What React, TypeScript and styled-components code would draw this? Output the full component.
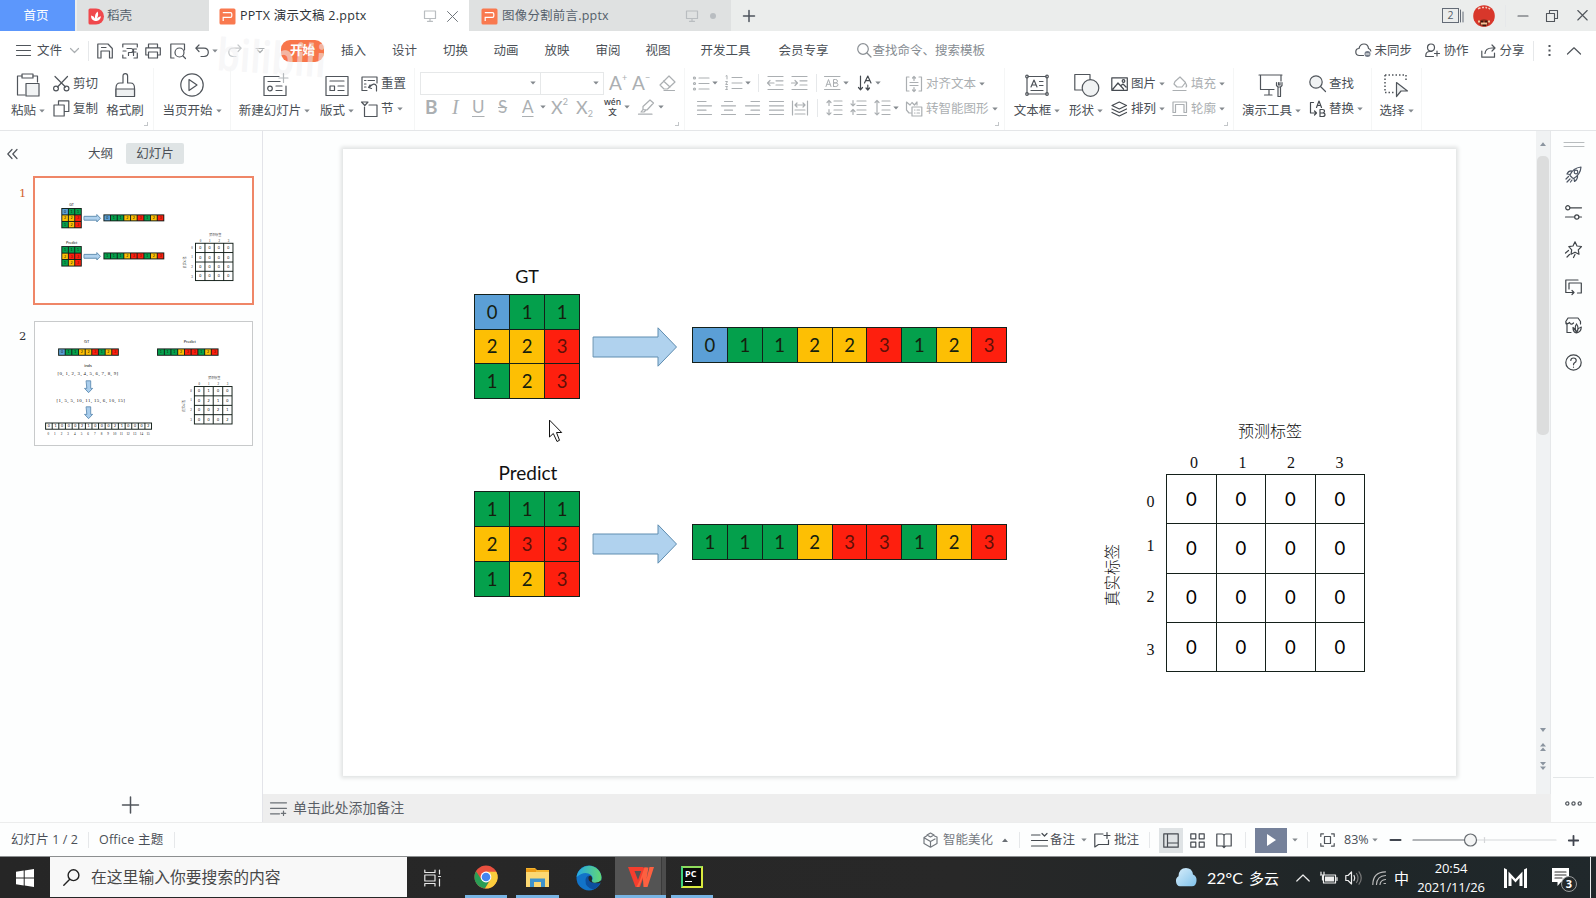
import React from "react";
import styled, { createGlobalStyle } from "styled-components";

const GlobalStyle = createGlobalStyle`
  * { box-sizing: border-box; }
  html, body { margin: 0; padding: 0; overflow: hidden; }
  body {
    width: 1596px;
    height: 898px;
    font-family: "Noto Sans", "Noto Sans CJK SC", sans-serif;
    font-size: 12.5px;
    color: #4a4f56;
    background: #fff;
  }
  svg { display: block; flex: none; overflow: visible; }
`;

const INK = "#50555b";
const DIM = "#abafb2";

/* ---------- shared pieces ---------- */

const Window = styled.div`
  display: flex;
  flex-direction: column;
  width: 1596px;
  height: 898px;
  line-height: 18px;
  white-space: nowrap;
  position: relative;
`;

const Slot = styled.div<{ $w: number; $center?: boolean; $dim?: boolean }>`
  flex: none;
  display: flex;
  align-items: center;
  justify-content: ${(p) => (p.$center ? "center" : "flex-start")};
  width: ${(p) => p.$w}px;
  height: 100%;
  color: ${(p) => (p.$dim ? DIM : "inherit")};
`;

const VRule = styled.div<{ $h: number }>`
  width: 1px;
  height: ${(p) => p.$h}px;
  background: #e6e8ea;
`;

type IconProps = {
  w: number;
  h: number;
  d?: string;
  c?: string;
  sw?: number;
  children?: React.ReactNode;
};

const Icon = ({ w, h, d, c = INK, sw = 1.2, children }: IconProps) => (
  <svg
    width={w}
    height={h}
    viewBox={`0 0 ${w} ${h}`}
    fill="none"
    stroke={c}
    strokeWidth={sw}
    strokeLinecap="round"
    strokeLinejoin="round"
  >
    {d && <path d={d} />}
    {children}
  </svg>
);

const CaretBox = styled.span`
  display: inline-flex;
  margin-left: 3px;
`;

const Caret = ({ c = "#84898e", up = false }: { c?: string; up?: boolean }) => (
  <CaretBox>
    <svg width="6" height="4" viewBox="0 0 6 4">
      <path d={up ? "M0 4L3 0.5L6 4Z" : "M0.3 0.5H5.7L3 3.6Z"} fill={c} />
    </svg>
  </CaretBox>
);

/* ---------- document tabs ---------- */

const TabBar = styled.div`
  display: flex;
  height: 31px;
  background: #ebedec;
`;

const HomeTab = styled.div`
  width: 75px;
  margin-right: 2px;
  display: flex;
  align-items: center;
  justify-content: center;
  padding: 1px 3px 0 0;
  color: #fff;
  background: #5c97fc;
`;

const DocTab = styled.div<{ $w: number; $active?: boolean; $pad: number }>`
  width: ${(p) => p.$w}px;
  display: flex;
  align-items: center;
  padding: 1px 0 0 ${(p) => p.$pad}px;
  color: ${(p) => (p.$active ? "#2e3338" : "#555f6b")};
  background: ${(p) => (p.$active ? "#fff" : "#dfe1e1")};
`;

const TabName = styled.span<{ $track?: number }>`
  font-family: "Open Sans", "Noto Sans CJK SC", sans-serif;
  letter-spacing: ${(p) => p.$track ?? 0}px;
`;

const PptIcon = () => (
  <svg width="17" height="17" viewBox="0 0 17 17">
    <rect x="0.5" y="0.5" width="16" height="16" rx="1.500" fill="#f9794f" />
    <path d="M4.200 13V9.400H11.500Q12.800 9.400 12.800 8.100V5.900Q12.800 4.600 11.500 4.600H3.800" fill="none" stroke="#fff" strokeWidth="1.200" />
  </svg>
);

const DocerIcon = () => (
  <svg width="16" height="17" viewBox="0 0 16 17">
    <path d="M2 .5H8A8 8 0 0 1 8 16.5H2Q.5 16.5 .5 15V2Q.5.5 2 .5Z" fill="#f0484c" />
    <path d="M7 13Q3 12 3 7.500Q6 8 7 10.500Q6.500 6 9.500 3.500Q11 6.500 9 10.500Q10.500 8.500 13 8.300Q12.500 12.500 8.500 13Z" fill="#fff" />
  </svg>
);

const Monitor = () => <Icon w={12} h={12} c="#b9bdc0" d="M.5 1H11.500V8.500H.5ZM6 8.500V11M3.500 11.300H8.500" />;

const TabEnd = styled.div`
  width: 711px;
  padding-left: 12px;
  display: flex;
  align-items: center;
`;

const Avatar = () => (
  <svg width="22" height="22" viewBox="0 0 22 22">
    <circle cx="11" cy="11" r="10.800" fill="#d8372b" />
    <path d="M5 3.800L7.500 2.800M9 2.500H11M12.500 2.300L14 3M15.500 3L17 4.200" stroke="#f3c9bd" strokeWidth="1.500" fill="none" />
    <path d="M6 16Q11 12.500 16 16L15 20.500H7Z" fill="#8b2d1c" />
    <path d="M5 15.500H7V17.500H5ZM15 15.500H17V17.500H15ZM8 17.500H14V19.500H8Z" fill="#f0c79b" />
    <path d="M8 16.500H10M12 16.500H14M9.500 20.500H13" stroke="#3a1c10" strokeWidth="1.500" />
  </svg>
);

/* ---------- menu ---------- */

const MenuBar = styled.div`
  position: relative;
  display: flex;
  align-items: center;
  height: 37px;
  padding: 2px 0 0 16px;
  background: #fff;
`;

const Pill = styled.div`
  width: 43px;
  height: 22px;
  border-radius: 9px;
  display: flex;
  align-items: center;
  justify-content: center;
  background: #f8764b;
  color: #fff;
  font-weight: 700;
`;

const Watermark = styled.div`
  position: absolute;
  left: 217px;
  top: 3px;
  transform: rotate(4deg) scaleY(1.2);
  font: 600 37px/46px "Noto Sans", sans-serif;
  color: rgba(240, 240, 242, 0.55);
  pointer-events: none;
`;

const SearchHint = styled.span`
  color: #858b91;
`;

const MENU: [string, number][] = [
  ["插入", 51], ["设计", 51], ["切换", 50.5], ["动画", 51], ["放映", 51],
  ["审阅", 50], ["视图", 55], ["开发工具", 78], ["会员专享", 78],
];

/* ---------- ribbon ---------- */

const Ribbon = styled.div`
  display: flex;
  height: 63px;
  background: #fff;
  border-bottom: 1px solid #e4e6e8;
`;

const Group = styled.div<{ $w: number; $pad?: number }>`
  position: relative;
  flex: none;
  display: flex;
  width: ${(p) => p.$w}px;
  padding: 3px 0 2px ${(p) => p.$pad ?? 0}px;
  border-right: 1px solid #f5f6f6;
`;

const Corner = styled.div`
  position: absolute;
  right: 5px;
  bottom: 4px;
  width: 4px;
  height: 4px;
  border: solid #c3c6c9;
  border-width: 0 1px 1px 0;
`;

const BigBox = styled.div<{ $w: number }>`
  flex: none;
  width: ${(p) => p.$w}px;
  padding-top: 2px;
  display: flex;
  flex-direction: column;
  align-items: center;
  gap: 5px;
`;

const IconWell = styled.div`
  height: 24px;
  display: flex;
  align-items: center;
`;

const LabelLine = styled.div`
  height: 18px;
  display: flex;
  align-items: center;
`;

const Big = ({ w, label, caret, children }: { w: number; label: string; caret?: boolean; children: React.ReactNode }) => (
  <BigBox $w={w}>
    <IconWell>{children}</IconWell>
    <LabelLine>
      {label}
      {caret && <Caret />}
    </LabelLine>
  </BigBox>
);

const Stack = styled.div<{ $w: number; $pad?: number }>`
  flex: none;
  width: ${(p) => p.$w}px;
  padding-left: ${(p) => p.$pad ?? 0}px;
  display: flex;
  flex-direction: column;
`;

const Line = styled.div<{ $pad?: number; $h?: number }>`
  height: ${(p) => p.$h ?? 25}px;
  display: flex;
  align-items: center;
  padding-left: ${(p) => p.$pad ?? 0}px;
`;

const FontBox = styled.div<{ $w: number }>`
  width: ${(p) => p.$w}px;
  height: 23px;
  border: 1px solid #e6e8e9;
  margin-right: -1px;
  display: flex;
  align-items: center;
  justify-content: flex-end;
  padding-right: 4px;
`;

const Glyph = styled.span<{ $size: number; $bold?: boolean; $italic?: boolean; $serif?: boolean; $line?: string }>`
  font: ${(p) => (p.$italic ? "italic " : "")}${(p) => (p.$bold ? 700 : 400)} ${(p) => p.$size}px/18px
    ${(p) => (p.$serif ? '"Liberation Serif"' : "Lato")}, sans-serif;
  text-decoration: ${(p) => p.$line ?? "none"};
  text-underline-offset: 3px;
  text-decoration-thickness: 1px;
`;

const Small = styled.span<{ $drop?: boolean }>`
  font: 400 9px/9px Lato, sans-serif;
  align-self: ${(p) => (p.$drop ? "flex-end" : "flex-start")};
  padding: ${(p) => (p.$drop ? "0 0 1px" : "2px 0 0")};
`;

const WenStack = styled.span`
  display: flex;
  flex-direction: column;
  align-items: center;
  width: 17px;
  font-size: 8.5px;
  font-weight: 500;
  line-height: 10px;
  color: #3c4146;
`;

const RibbonView = () => (
  <Ribbon>
    <Group $w={154} $pad={6}>
      <Big w={44} label="粘贴" caret>
        <Icon w={24} h={24} d="M6 3H1.500V22H9M17 3H21.500V9">
          <path d="M6 1H17V5H6Z" />
          <path d="M10 10.500H23V23H10Z" fill="#f1f3f4" />
        </Icon>
      </Big>
      <Stack $w={54} $pad={3}>
        <Line>
          <Slot $w={20}>
            <Icon w={17} h={16} d="M2 .5L12.500 11M14.500 .5L4.500 11">
              <circle cx="3" cy="12.500" r="2.400" />
              <circle cx="13.500" cy="12.500" r="2.400" />
            </Icon>
          </Slot>
          剪切
        </Line>
        <Line>
          <Slot $w={20}>
            <Icon w={17} h={17} d="M5.500 5V.8H15.800V11.500H11.500M1 5H11.200V16H1Z" />
          </Slot>
          复制
        </Line>
      </Stack>
      <Big w={42} label="格式刷">
        <Icon w={21} h={24} d="M8 10V3Q8 .7 10.300 .7T12.600 3V10H15.500Q19.500 10 19.500 15V23.500H1V15Q1 10 5 10Z">
          <path d="M1 16H19.500V23.500H1Z" fill="#eef0f1" />
        </Icon>
      </Big>
      <Corner />
    </Group>
    <Group $w={77}>
      <Big w={76} label="当页开始" caret>
        <Icon w={24} h={24}>
          <circle cx="12" cy="12" r="11.200" />
          <path d="M9 6.500L17 12L9 17.500Z" />
        </Icon>
      </Big>
    </Group>
    <Group $w={184}>
      <Big w={87} label="新建幻灯片" caret>
        <Icon w={24} h={24} d="M16 3.500H1V22.500H23V13M5 8.500H17M13 13H19M13 17.500H19">
          <path d="M20.500 .5V9.500M16 5H25" stroke="#b4b8bb" />
          <circle cx="7" cy="15.500" r="2.300" />
        </Icon>
      </Big>
      <Big w={38} label="版式" caret>
        <Icon w={24} h={24} d="M1 3.500H23V22.500H1ZM5 8H19M13 13H19M13 17.500H19">
          <path d="M5 13H9.500V17.500H5Z" />
        </Icon>
      </Big>
      <Stack $w={59} $pad={5}>
        <Line>
          <Slot $w={20}>
            <Icon w={17} h={16} d="M6 14.500H1V1H16V7M3.500 4.500H5M7 4.500H13.500M3.500 8H5M3.500 11H5M9 9L7.500 11.500L10.500 12.500M8 11.500Q13.500 5.500 15.500 10V15" />
          </Slot>
          重置
        </Line>
        <Line>
          <Slot $w={20}>
            <Icon w={17} h={16} d="M.5 1H7L3.800 4.500ZM3.500 6V15.500H16V4H8" />
          </Slot>
          节
          <Caret />
        </Line>
      </Stack>
    </Group>
    <Group $w={270} $pad={5}>
      <Stack $w={260}>
        <Line $h={24}>
          <FontBox $w={121}><Caret /></FontBox>
          <FontBox $w={64}><Caret /></FontBox>
          <Slot $w={23} $dim><Slot $w={6} /><Glyph $size={19}>A</Glyph><Small>+</Small></Slot>
          <Slot $w={24} $dim><Slot $w={6} /><Glyph $size={19}>A</Glyph><Small>−</Small></Slot>
          <Slot $w={24}>
            <Slot $w={9} />
            <Icon w={17} h={16} c={DIM} d="M10 1L16 7L8.500 14H5L1 10ZM4.500 6L11 12M5 15.500H15.500" />
          </Slot>
        </Line>
        <Line $pad={5} $h={24}>
          <Slot $w={25} $dim><Glyph $size={19} $bold>B</Glyph></Slot>
          <Slot $w={21} $dim><Slot $w={2} /><Glyph $size={20} $italic $serif>I</Glyph></Slot>
          <Slot $w={25} $dim><Slot $w={1} /><Glyph $size={17} $line="underline">U</Glyph></Slot>
          <Slot $w={24} $dim><Slot $w={2} /><Glyph $size={17} $line="line-through">S</Glyph></Slot>
          <Slot $w={30} $dim><Slot $w={2} /><Glyph $size={17} $line="underline">A</Glyph><CaretBox /><Caret /></Slot>
          <Slot $w={25} $dim><Slot $w={1} /><Glyph $size={18}>X</Glyph><Small>2</Small></Slot>
          <Slot $w={29} $dim><Slot $w={1} /><Glyph $size={18}>X</Glyph><Small $drop>2</Small></Slot>
          <Slot $w={34}><WenStack><span>wén</span><span>文</span></WenStack><Caret /></Slot>
          <Slot $w={30}>
            <Icon w={17} h={16} c={DIM} d="M12 1L15.500 4L9 11L5 10.500V7.500ZM5 10.500L3 13H6L8 11M.5 15.200H14" />
            <Caret />
          </Slot>
        </Line>
      </Stack>
      <Corner />
    </Group>
    <Group $w={320} $pad={8}>
      <Stack $w={213}>
        <Line $h={24}>
          <Slot $w={32}>
            <Icon w={16} h={15} c={DIM} d="M6 2H16M6 7.500H16M6 13H16">
              <circle cx="1.500" cy="2" r="1" /><circle cx="1.500" cy="7.500" r="1" /><circle cx="1.500" cy="13" r="1" />
            </Icon>
            <Caret />
          </Slot>
          <Slot $w={33}>
            <Icon w={17} h={16} c={DIM} d="M7 2.500H17M7 8H17M7 13.500H17M1 1L2 .5V4M.7 6.500H2.500L.7 9.500H2.500M.7 11.500H2.500L1.500 13L2.500 14.500H.7" sw={1} />
            <Caret />
          </Slot>
          <Slot $w={9}><VRule $h={18} /></Slot>
          <Slot $w={24}><Icon w={16} h={14} c={DIM} d="M1 .5H16M9 4.800H16M9 9H16M1 13.500H16M7 7H.5M3 4.500L.5 7L3 9.500" /></Slot>
          <Slot $w={25}><Icon w={16} h={14} c={DIM} d="M1 .5H16M9 4.800H16M9 9H16M1 13.500H16M.5 7H6.500M4 4.500L6.500 7L4 9.500" /></Slot>
          <Slot $w={8}><VRule $h={18} /></Slot>
          <Slot $w={34} $dim>
            <Icon w={16} h={14} c={DIM} d="M.5 .5H16M.5 13.500H16M2 10.500L4.500 3.500L7 10.500M3 8.300H6M9.500 10.500V3.500H11.500Q13.500 3.500 13.500 5.200T11.500 6.900H9.500H11.800Q14 6.900 14 8.700T11.800 10.500H9.500" sw={1} />
            <Caret />
          </Slot>
          <Slot $w={34}>
            <Icon w={14} h={16} c="#454a50" d="M2.500 1V14.500M.5 12.500L2.500 14.800L4.500 12.500M6.500 8L9.800 1L13 8M7.800 5.700H11.800M9.800 10V14.500M8 13L9.800 15L11.500 13" />
            <Caret />
          </Slot>
        </Line>
        <Line $pad={4}>
          <Slot $w={24}><Icon w={15} h={14} c={DIM} d="M.5 .5H9M.5 4.800H14.500M.5 9.200H9M.5 13.500H14.500" /></Slot>
          <Slot $w={24}><Icon w={15} h={14} c={DIM} d="M3.500 .5H11.500M.5 4.800H14.500M3.500 9.200H11.500M.5 13.500H14.500" /></Slot>
          <Slot $w={24}><Icon w={15} h={14} c={DIM} d="M6 .5H14.500M.5 4.800H14.500M6 9.200H14.500M.5 13.500H14.500" /></Slot>
          <Slot $w={23}><Icon w={15} h={14} c={DIM} d="M.5 .5H14.500M.5 4.800H14.500M.5 9.200H14.500M.5 13.500H14.500" /></Slot>
          <Slot $w={25}><Icon w={16} h={14} c={DIM} d="M.5 0V14M15.500 0V14M3 4H13M5 2L3 4L5 6M11 2L13 4L11 6M3 9H13M3 13H13" /></Slot>
          <Slot $w={9}><VRule $h={18} /></Slot>
          <Slot $w={24}><Icon w={16} h={15} c={DIM} d="M8 1H16M8 5.500H16M8 10H16M8 14.500H16M3 5.500V.8M1 2.500L3 .5L5 2.500M3 9.500V14.500M1 12.800L3 14.800L5 12.800" /></Slot>
          <Slot $w={24}><Icon w={16} h={15} c={DIM} d="M7 1H16M7 5.500H16M7 10H16M7 14.500H16M3 .5V5.500M1 3.800L3 5.800L5 3.800M3 14.500V9.500M1 11.500L3 9.500L5 11.500" /></Slot>
          <Slot $w={28}><Icon w={16} h={15} c={DIM} d="M8 1H16M8 5.500H16M8 10H16M8 14.500H16M3 .5V14.500M1 2.500L3 .5L5 2.500M1 12.800L3 14.800L5 12.800" /><Caret /></Slot>
        </Line>
      </Stack>
      <Stack $w={98}>
        <Line>
          <Slot $w={20}><Icon w={16} h={16} c={DIM} d="M3 1H.5V15H3M13 1H15.500V15H13M4 6.500H12M4 9.500H12M8 .5V4.500M6.500 2L8 .5L9.500 2M8 11.500V15.500M6.500 14L8 15.500L9.500 14" /></Slot>
          <Slot $w={70} $dim>对齐文本<Caret /></Slot>
        </Line>
        <Line>
          <Slot $w={20}><Icon w={16} h={16} c={DIM} d="M5 12H3L.5 9V1L4 4L6 1.500L8.500 4L11 1V4M6 6H15.800V15H6ZM8.500 9H9M11 9H13.500M8.500 12H9M11 12H13.500" /></Slot>
          <Slot $w={76} $dim>转智能图形<Caret /></Slot>
        </Line>
      </Stack>
      <Corner />
    </Group>
    <Group $w={229} $pad={6}>
      <Big w={52} label="文本框" caret>
        <Icon w={24} h={24} d="M3 3.500H21M3 21H21M2 5V20M22 5V20M6 14L9 7L12 14M7 12H11M14.500 8.500H18M14.500 12.500H18M6 17.500H18">
          <circle cx="2" cy="3.500" r="1.300" /><circle cx="22" cy="3.500" r="1.300" /><circle cx="2" cy="21" r="1.300" /><circle cx="22" cy="21" r="1.300" />
        </Icon>
      </Big>
      <Big w={46} label="形状" caret>
        <Icon w={25} h={24}>
          <path d="M.8 1.500H16V17H.8Z" />
          <circle cx="16.500" cy="15" r="8.300" fill="#f1f3f4" />
        </Icon>
      </Big>
      <Stack $w={63} $pad={2}>
        <Line>
          <Slot $w={20}>
            <Icon w={17} h={14} c="#454a50" d="M.8 .8H16.300V13.300H.8ZM2 12L7 6L12.500 12M10 8.500L12 7L15 10">
              <circle cx="12.500" cy="4" r="1.300" />
            </Icon>
          </Slot>
          图片<Caret />
        </Line>
        <Line>
          <Slot $w={20}><Icon w={17} h={16} c="#454a50" d="M8.300 1L15.500 4.500L8.300 8L1 4.500ZM1 8L8.300 11.500L15.500 8M1 11.500L8.300 15L15.500 11.500" /></Slot>
          排列<Caret />
        </Line>
      </Stack>
      <Stack $w={58}>
        <Line>
          <Slot $w={19}><Icon w={16} h={15} c={DIM} d="M3 5.500L8 1L13.500 6.500L10 11H5L2 8ZM13.500 7Q15.500 10 14 11M1 14.500H14" /></Slot>
          <Slot $w={36} $dim>填充<Caret /></Slot>
        </Line>
        <Line>
          <Slot $w={19}><Icon w={16} h={15} c={DIM} d="M1 11.500V1H14.500V11.500H12V3.500H3.500V11.500ZM1 14.500H14.500" /></Slot>
          <Slot $w={36} $dim>轮廓<Caret /></Slot>
        </Line>
      </Stack>
      <Corner />
    </Group>
    <Group $w={138}>
      <Big w={75} label="演示工具" caret>
        <Icon w={25} h={24} d="M0 2H23M1.500 2V16.500H15M22 2V8M10 16.500V21.500M5.500 22H13M19 14V23.500H21.500V14M17.500 9.500V12.500L19 14H21.500L23 12.500V9.500M19.500 9.500V12H21V9.500" />
      </Big>
      <Stack $w={60}>
        <Line>
          <Slot $w={20}>
            <Icon w={18} h={17} d="M11.500 11.500L16.500 16.500">
              <circle cx="7" cy="7" r="6.200" fill="#f1f3f4" />
            </Icon>
          </Slot>
          查找
        </Line>
        <Line>
          <Slot $w={20}><Icon w={17} h={16} c="#454a50" d="M4.500 1.500H1.500V12H7.500M5.500 10L7.500 12L5.500 14M7.500 6.500L10 0L12.500 6.500M8.500 4.500H11.500M11 15.500V8.500H13.500Q15.500 8.500 15.500 10.200T13.500 12H11H13.800Q16 12 16 13.700T13.800 15.500H11" /></Slot>
          替换<Caret />
        </Line>
      </Stack>
    </Group>
    <Group $w={50}>
      <Big w={49} label="选择" caret>
        <Icon w={25} h={24}>
          <path d="M1 2H22M1 2V18M22 2V9M1 19.500H11" strokeDasharray="1.500 2" strokeWidth="1.500" strokeLinecap="butt" />
          <path d="M12.500 9.500L23.500 18H17L12.500 23.500Z" fill="#eef0f1" />
        </Icon>
      </Big>
    </Group>
  </Ribbon>
);

/* ---------- slide content ---------- */

const SLIDE_W = 1113;
const SLIDE_H = 626;
const CELL_COLORS = ["#5b9fd6", "#04a04c", "#fdbf04", "#fe1f0e"];

const Sheet = styled.div<{ $scale: number }>`
  position: relative;
  flex: none;
  width: ${SLIDE_W}px;
  height: ${SLIDE_H}px;
  background: #fff;
  transform: scale(${(p) => p.$scale});
  transform-origin: 0 0;
  color: #111;
`;

const Cells = styled.div<{ $x: number; $y: number; $w: number; $h: number; $cols: number; $line: number }>`
  position: absolute;
  left: ${(p) => p.$x}px;
  top: ${(p) => p.$y}px;
  width: ${(p) => p.$w}px;
  height: ${(p) => p.$h}px;
  display: grid;
  grid-template-columns: repeat(${(p) => p.$cols}, 1fr);
  grid-auto-rows: 1fr;
  gap: ${(p) => p.$line}px;
  padding: ${(p) => p.$line}px;
  background: #14201a;
`;

const Cell = styled.div<{ $fill: string; $size: number; $ink: string }>`
  display: flex;
  align-items: center;
  justify-content: center;
  min-width: 0;
  min-height: 0;
  background: ${(p) => p.$fill};
  color: ${(p) => p.$ink};
  font: 400 ${(p) => p.$size}px/1 Lato, sans-serif;
`;

const Note = styled.div<{ $x: number; $y: number; $size: number; $serif?: boolean; $track?: number; $turn?: boolean }>`
  position: absolute;
  left: ${(p) => p.$x}px;
  top: ${(p) => p.$y}px;
  transform: translate(-50%, -50%) ${(p) => (p.$turn ? "rotate(-90deg)" : "")};
  font: 400 ${(p) => p.$size}px/20px ${(p) => (p.$serif ? '"Liberation Serif"' : "Lato")}, "Noto Sans CJK SC", sans-serif;
  font-weight: ${(p) => (p.$serif ? 300 : 400)};
  letter-spacing: ${(p) => p.$track ?? 0}px;
`;

const ArrowBox = styled.div<{ $x: number; $y: number }>`
  position: absolute;
  left: ${(p) => p.$x}px;
  top: ${(p) => p.$y}px;
`;

const RightArrow = ({ x, y, line }: { x: number; y: number; line: number }) => (
  <ArrowBox $x={x} $y={y}>
    <Icon w={84} h={40} c="#5f8db0" sw={line}>
      <path d="M.5 10H65V.8L83.500 20L65 39.200V30H.5Z" fill="#b0d2ee" strokeLinejoin="miter" />
    </Icon>
  </ArrowBox>
);

const DownArrow = ({ x, y }: { x: number; y: number }) => (
  <ArrowBox $x={x} $y={y}>
    <Icon w={44} h={64} c="#4f7fa8" sw={4}>
      <path d="M11 1H33V40H43L22 62L1 40H11Z" fill="#a9cdec" />
    </Icon>
  </ArrowBox>
);

const Numbers = ({ x, y, w, h, cols, line, values, plain }: {
  x: number; y: number; w: number; h: number; cols: number; line: number; values: number[]; plain?: boolean;
}) => (
  <Cells $x={x} $y={y} $w={w} $h={h} $cols={cols} $line={line}>
    {values.map((v, i) => (
      <Cell key={i} $fill={plain ? "#fff" : CELL_COLORS[v]} $size={18.5} $ink={plain ? "#000" : v === 3 ? "#5e1008" : "#14200e"}>
        {v}
      </Cell>
    ))}
  </Cells>
);

const Confusion = ({ line, values, dx = 0 }: { line: number; values: number[]; dx?: number }) => (
  <>
    <Note $x={927 + dx} $y={282.5} $size={16} $serif>预测标签</Note>
    <Note $x={769.5 + dx} $y={426} $size={15.5} $serif $turn>真实标签</Note>
    {[851, 899.5, 948, 996.5].map((x, i) => <Note key={i} $x={x + dx} $y={313.5} $size={16} $serif>{i}</Note>)}
    {[353, 397, 448, 501].map((y, i) => <Note key={i} $x={807.5 + dx} $y={y} $size={16} $serif>{i}</Note>)}
    <Numbers x={823 + dx} y={325} w={199} h={198} cols={4} line={line} values={values} plain />
  </>
);

const GT = [0, 1, 1, 2, 2, 3, 1, 2, 3];
const PRED = [1, 1, 1, 2, 3, 3, 1, 2, 3];

const SlideOne = ({ scale, line }: { scale: number; line: number }) => (
  <Sheet $scale={scale}>
    <Note $x={184} $y={127} $size={18}>GT</Note>
    <Numbers x={131} y={145} w={106} h={105} cols={3} line={line} values={GT} />
    <RightArrow x={250} y={178} line={line} />
    <Numbers x={349} y={178} w={315} h={36} cols={9} line={line} values={GT} />
    <Note $x={185} $y={324} $size={19}>Predict</Note>
    <Numbers x={131} y={342} w={106} h={106} cols={3} line={line} values={PRED} />
    <RightArrow x={250} y={375} line={line} />
    <Numbers x={349} y={375} w={315} h={36} cols={9} line={line} values={PRED} />
    <Confusion line={line} values={Array(16).fill(0)} />
  </Sheet>
);

const SlideTwo = ({ scale }: { scale: number }) => (
  <Sheet $scale={scale}>
    <Note $x={261} $y={95} $size={20}>GT</Note>
    <Numbers x={114} y={131} w={313} h={38} cols={9} line={5} values={GT} />
    <Note $x={793} $y={95} $size={20}>Predict</Note>
    <Numbers x={624} y={131} w={317} h={38} cols={9} line={5} values={PRED} />
    <Note $x={268} $y={221} $size={22}>inds</Note>
    <Note $x={268} $y={259} $size={25} $serif $track={2}>[0, 1, 2, 3, 4, 5, 6, 7, 8, 9]</Note>
    <DownArrow x={249} y={297} />
    <Note $x={283} $y={399} $size={25} $serif $track={2}>[1, 5, 5, 10, 11, 15, 6, 10, 15]</Note>
    <DownArrow x={249} y={431} />
    <Numbers x={47} y={513} w={551} h={37} cols={16} line={5} values={[0, 1, 0, 0, 0, 2, 1, 0, 0, 0, 2, 1, 0, 0, 0, 2]} plain />
    {Array.from({ length: 16 }, (_, i) => <Note key={i} $x={63 + i * 34.3} $y={573} $size={17} $serif>{i}</Note>)}
    <Confusion line={5} dx={-9} values={[0, 1, 0, 0, 0, 2, 1, 0, 0, 0, 2, 1, 0, 0, 0, 2]} />
  </Sheet>
);

/* ---------- main area ---------- */

const Main = styled.div`
  display: flex;
  height: 691px;
  background: #fdfefe;
`;

const Outline = styled.div`
  width: 263px;
  border-right: 1px solid #e3e4e9;
  display: flex;
  flex-direction: column;
`;

const OutlineTabs = styled.div`
  display: flex;
  align-items: center;
  height: 21px;
  margin: 12px 0 12px 7px;
`;

const ActiveTab = styled.div`
  width: 58px;
  height: 21px;
  border-radius: 2px;
  display: flex;
  align-items: center;
  justify-content: center;
  background: #dfe4e5;
`;

const ThumbRow = styled.div<{ $h: number; $gap: number }>`
  display: flex;
  height: ${(p) => p.$h}px;
  margin-bottom: ${(p) => p.$gap}px;
`;

const ThumbNo = styled.div<{ $on?: boolean }>`
  width: 33px;
  padding: ${(p) => (p.$on ? 9 : 7)}px 0 0 19px;
  font: 400 11.5px/17px "DejaVu Serif", serif;
  color: ${(p) => (p.$on ? "#d2622f" : "#2d3238")};
`;

const ThumbFrame = styled.div<{ $on?: boolean }>`
  width: ${(p) => (p.$on ? 221 : 219)}px;
  margin-left: ${(p) => (p.$on ? 0 : 1)}px;
  padding: ${(p) => (p.$on ? "1.5px 0 0 0.5px" : "1px")};
  border: ${(p) => (p.$on ? "2px solid #ef8667" : "1px solid #c8cacb")};
  background: #fff;
  overflow: hidden;
`;

const AddSlide = styled.div`
  margin-top: auto;
  height: 35px;
  padding: 0 0 0 122px;
`;

const Center = styled.div`
  width: 1288px;
  display: flex;
  flex-direction: column;
`;

const Canvas = styled.div`
  display: flex;
  height: 663px;
`;

const Desk = styled.div`
  position: relative;
  width: 1273px;
  padding: 18px 0 0 80px;
`;

const Page = styled.div`
  width: 1113px;
  height: 627px;
  box-shadow: 0 0 4px 2px #dfe1e1;
`;

const Pointer = styled.div`
  position: absolute;
  left: 286px;
  top: 289px;
`;

const ScrollTrack = styled.div`
  width: 15px;
  display: flex;
  flex-direction: column;
  align-items: center;
  background: #f0f2f3;
  border-right: 1px solid #e6e8ea;
  padding: 11px 1px 0 0;
`;

const ScrollThumb = styled.div`
  width: 12px;
  height: 279px;
  margin: 10px 0 293px;
  border-radius: 5px;
  background: #dcdddd;
`;

const Arrows = styled.div`
  display: flex;
  flex-direction: column;
  gap: 11px;
`;

const NotesBar = styled.div`
  display: flex;
  align-items: center;
  height: 28px;
  padding-left: 7px;
  font-size: 13.9px;
  color: #5a5f66;
  background: #eeeeee;
`;

const SideRail = styled.div`
  width: 45px;
  display: flex;
  flex-direction: column;
  align-items: center;
  padding-top: 11px;
`;

const RailList = styled.div`
  display: flex;
  flex-direction: column;
  margin-top: 9px;
`;

const RailItem = styled.div`
  width: 18px;
  height: 37.6px;
  display: flex;
  align-items: center;
  justify-content: center;
`;

const RailEnd = styled.div`
  width: 41px;
  height: 45px;
  margin-top: auto;
  border-top: 1px solid #e4e7e8;
  display: flex;
  align-items: center;
  justify-content: center;
  padding-top: 7px;
`;

/* ---------- status bar ---------- */

const StatusBar = styled.div`
  display: flex;
  align-items: center;
  height: 34px;
  padding: 1px 0 0 11px;
  border-top: 1px solid #eceded;
  background: #fdfefe;
`;

const SoftLabel = styled.span`
  color: #73787e;
`;

const ViewButton = styled.div`
  width: 24px;
  height: 25px;
  display: flex;
  align-items: center;
  justify-content: center;
  background: #dfe3e5;
`;

const PlayButton = styled.div`
  width: 32px;
  height: 25px;
  margin-right: 2px;
  display: flex;
  align-items: center;
  justify-content: center;
  background: #75819a;
`;

/* ---------- taskbar ---------- */

const Taskbar = styled.div`
  display: flex;
  height: 42px;
  border-top: 1px solid #8c8f90;
  background: linear-gradient(90deg, #262626, #282828 60%, #1f2628 85%, #20282b);
  color: #fff;
`;

const SearchBox = styled.div`
  width: 357px;
  height: 40px;
  padding-left: 13px;
  display: flex;
  align-items: center;
  background: #f8f8f8;
  color: #484848;
  font-size: 15.8px;
`;

const TaskButton = styled.div<{ $w: number; $on?: boolean; $run?: boolean; $gap: number }>`
  flex: none;
  width: ${(p) => p.$w}px;
  margin-right: ${(p) => p.$gap}px;
  display: flex;
  align-items: center;
  justify-content: center;
  padding-top: ${(p) => (p.$run ? 2 : 0)}px;
  background: ${(p) => (p.$on ? "linear-gradient(90deg, #545454 46px, #3a3a3a 46px, #3a3a3a 47px, #4c4c4c 47px)" : "transparent")};
  border-bottom: ${(p) => (p.$run ? "3px solid #78b4e4" : "none")};
`;

const Clock = styled.div`
  width: 70px;
  font: 400 13px/19px "Open Sans", sans-serif;
  text-align: center;
  letter-spacing: -0.15px;
`;

const Temperature = styled.span`
  font: 400 16px/18px Lato, sans-serif;
`;

const TrayText = styled.span`
  font-size: 15px;
`;

const PcBadge = styled.div`
  width: 22px;
  height: 22px;
  border: 2px solid #d9ea3e;
  border-top-color: #8fdc5c;
  border-left-color: #3fd27c;
  background: #0a0a0a;
  padding: 1px 0 0 2px;
  font: 700 9px/10px "Open Sans", sans-serif;
`;

const PcBar = styled.div`
  width: 7px;
  height: 1px;
  margin-top: 2px;
  background: #fff;
`;

const BadgeWrap = styled.div`
  position: relative;
  width: 17px;
`;

const Badge = styled.div`
  position: absolute;
  left: 9px;
  top: 8px;
  width: 16px;
  height: 16px;
  border: 1px solid #9a9d9e;
  border-radius: 50%;
  background: #23292b;
  font: 700 11px/14px "Open Sans", sans-serif;
  text-align: center;
`;

const WinCount = styled.div`
  width: 17px;
  height: 15px;
  border: 1px solid #636b76;
  font: 400 10.5px/13px "Open Sans", sans-serif;
  text-align: center;
  color: #555d68;
`;

export default function App() {
  return (
    <Window>
      <GlobalStyle />
      <TabBar>
        <HomeTab>首页</HomeTab>
        <DocTab $w={132} $pad={11}>
          <Slot $w={19}><DocerIcon /></Slot>稻壳
        </DocTab>
        <DocTab $w={260} $pad={10} $active>
          <Slot $w={21}><PptIcon /></Slot>
          <Slot $w={184}><TabName $track={0.27}>PPTX 演示文稿 2.pptx</TabName></Slot>
          <Slot $w={23}><Monitor /></Slot>
          <Icon w={11} h={11} c="#70767c" d="M.5 .5L10.500 10.500M10.500 .5L.5 10.500" sw={1} />
        </DocTab>
        <DocTab $w={262} $pad={12}>
          <Slot $w={21}><PptIcon /></Slot>
          <Slot $w={184}><TabName $track={0.2}>图像分割前言.pptx</TabName></Slot>
          <Slot $w={24}><Monitor /></Slot>
          <Icon w={6} h={6} c="none"><circle cx="3" cy="3" r="3" fill="#b9bdc1" /></Icon>
        </DocTab>
        <TabEnd><Icon w={12} h={12} c="#4d535c" d="M6 .5V11.500M.5 6H11.500" sw={1.5} /></TabEnd>
        <Slot $w={31}>
          <WinCount>2</WinCount>
          <Icon w={6} h={14} c="#636b76" d="M1.500 1V13M4 3V13" sw={1} />
        </Slot>
        <Slot $w={32}><Avatar /></Slot>
        <Slot $w={13}><VRule $h={22} /></Slot>
        <Slot $w={28}><Icon w={10} h={2} d="M0 1H10" sw={1.1} /></Slot>
        <Slot $w={31}><Icon w={12} h={12} d="M.5 3.500H8.500V11.500H.5ZM3.500 3V.5H11.500V8.500H9" sw={1.1} /></Slot>
        <Icon w={11} h={31} d="M.8 10.500L10.200 20M10.200 10.500L.8 20" sw={1.1} />
      </TabBar>

      <MenuBar>
        <Slot $w={21}><Icon w={15} h={11} d="M.5 .5H14.500M.5 5.500H14.500M.5 10.500H14.500" /></Slot>
        <Slot $w={33}>文件</Slot>
        <Slot $w={18}><Icon w={9} h={5} c={DIM} d="M.5 .5L4.500 4.500L8.500 .5" /></Slot>
        <Slot $w={9}><VRule $h={20} /></Slot>
        <Slot $w={25}><Icon w={16} h={16} d="M3 15H.8V1H11L15.300 5.500V15H13M4 15V8H12.500V15M4.500 4.500H9" /></Slot>
        <Slot $w={23}><Icon w={16} h={16} d="M.8 4V1H15.300V4M.8 12V15H4M15.300 10V15H12M1 8H4M5 5.500H9Q11 5.500 11 7.500T9 9.500H6.500V12.500M11.500 12.500V6H14.500M11.500 9H14" /></Slot>
        <Slot $w={25}><Icon w={16} h={16} d="M3.500 4.500V1H12.500V4.500M3.500 12H.8V4.800H15.300V12H12.500M3.500 9H12.500V15H3.500Z" /></Slot>
        <Slot $w={25}><Icon w={16} h={16} d="M4 15H.8V1H14.500V7M13 13L15.500 15.500"><circle cx="9.500" cy="9.500" r="4.500" /></Icon></Slot>
        <Slot $w={33}><Icon w={14} h={13} d="M4 1L.8 4.200L4 7.500M1 4.200H9Q13.300 4.200 13.300 8.300T9 12.500H6" /><Caret /></Slot>
        <Slot $w={28}><Icon w={14} h={13} c="#c5c8ca" d="M10 1L13.200 4.200L10 7.500M13 4.200H5Q.8 4.200 .8 8.300T5 12.500H8" /></Slot>
        <Slot $w={25}><Icon w={8} h={5} c={DIM} d="M0 .5H8M1.500 2L4 4.500L6.500 2" /></Slot>
        <Slot $w={60}><Pill>开始</Pill></Slot>
        {MENU.map(([t, w]) => <Slot key={t} $w={w}>{t}</Slot>)}
        <Slot $w={16}><Icon w={15} h={15} c="#8b9095" d="M10 10L14 14"><circle cx="6" cy="6" r="5.300" /></Icon></Slot>
        <Slot $w={482}><SearchHint>查找命令、搜索模板</SearchHint></Slot>
        <Slot $w={20}>
          <Icon w={17} h={15} d="M8.500 12.500H4.500Q.8 12.500 .8 9T4 5.500Q5 1 9 1T13.500 5.500Q15.500 6 15.800 8">
            <circle cx="12.500" cy="11" r="3" fill="#747c88" stroke="none" />
            <path d="M11 11H14" stroke="#fff" />
          </Icon>
        </Slot>
        <Slot $w={50}>未同步</Slot>
        <Slot $w={19}>
          <Icon w={15} h={15} d="M8.500 13.500H.8V12.500Q.8 8.500 5 8.500H7M9.500 10.500H14.500M12 8V13"><circle cx="6" cy="4.500" r="3.500" /></Icon>
        </Slot>
        <Slot $w={37}>协作</Slot>
        <Slot $w={19}><Icon w={15} h={14} d="M.8 7V13.200H13.500V9M4 9.500Q4.500 4 11 4H14M11 1L14 4L11 7" /></Slot>
        <Slot $w={33}>分享</Slot>
        <Slot $w={15}><VRule $h={20} /></Slot>
        <Slot $w={19}><Icon w={3} h={13} c="none"><path d="M.5 1H2.500V3H.5ZM.5 5.500H2.500V7.500H.5ZM.5 10H2.500V12H.5Z" fill={INK} /></Icon></Slot>
        <Icon w={14} h={8} d="M.5 7L7 .8L13.500 7" />
        <Watermark>bilibili</Watermark>
      </MenuBar>

      <RibbonView />

      <Main>
        <Outline>
          <OutlineTabs>
            <Slot $w={81}><Icon w={11} h={10} d="M5 .5L.8 5L5 9.500M10 .5L5.800 5L10 9.500" /></Slot>
            <Slot $w={38}>大纲</Slot>
            <ActiveTab>幻灯片</ActiveTab>
          </OutlineTabs>
          <ThumbRow $h={129} $gap={16}>
            <ThumbNo $on>1</ThumbNo>
            <ThumbFrame $on><SlideOne scale={0.1932} line={5} /></ThumbFrame>
          </ThumbRow>
          <ThumbRow $h={125} $gap={0}>
            <ThumbNo>2</ThumbNo>
            <ThumbFrame><SlideTwo scale={0.194} /></ThumbFrame>
          </ThumbRow>
          <AddSlide><Icon w={17} h={35} d="M8.500 10V26M.5 18H16.500" sw={1.5} /></AddSlide>
        </Outline>

        <Center>
          <Canvas>
            <Desk>
              <Page><SlideOne scale={1} line={1} /></Page>
              <Pointer>
                <Icon w={13} h={22} c="#111" sw={1}>
                  <path d="M.5 .5V17L4.300 13.500L8 21.500L10.500 20.300L7.500 12.500H12.300Z" fill="#fff" />
                </Icon>
              </Pointer>
            </Desk>
            <ScrollTrack>
              <Icon w={6} h={4} c="none"><path d="M0 4L3 .3L6 4Z" fill="#8b95a0" /></Icon>
              <ScrollThumb />
              <Arrows>
                <Icon w={6} h={4} c="none"><path d="M0 0H6L3 4Z" fill="#8b95a0" /></Icon>
                <Icon w={6} h={8} c="none"><path d="M0 3.500L3 0L6 3.500ZM0 8L3 4.500L6 8Z" fill="#8b95a0" /></Icon>
                <Icon w={6} h={8} c="none"><path d="M0 0H6L3 3.500ZM0 4.500H6L3 8Z" fill="#8b95a0" /></Icon>
              </Arrows>
            </ScrollTrack>
          </Canvas>
          <NotesBar>
            <Slot $w={23}><Icon w={17} h={13} c="#6b7076" d="M.5 .8H16.500M.5 6.300H16.500M.5 11.800H9.500M13.500 9V13.500M11.300 11.300H15.700" /></Slot>
            单击此处添加备注
          </NotesBar>
        </Center>

        <SideRail>
          <Icon w={20} h={5} c="#b8bcbe" d="M0 .5H20M0 4.500H20" sw={1} />
          <RailList>
            <RailItem>
              <Icon w={17} h={17} c="#4d5664" d="M5 9Q8 2 16 1Q15.500 8.500 8.500 12.500L7.500 12L5 9.500ZM5 8.500L2 8Q3.500 4.500 7 5M9 12.500L9.500 15.500Q13 13 12.500 9.500M1 13L3.500 10.500M2 16L5 13M5.500 16L7 14"><circle cx="11" cy="6" r="1.800" /></Icon>
            </RailItem>
            <RailItem>
              <Icon w={17} h={14} c="#40454a" d="M5 2.800H16.500M.5 12H9.500M14 12H16.500"><circle cx="2.800" cy="2.800" r="2.100" /><circle cx="11.800" cy="12" r="2.100" /></Icon>
            </RailItem>
            <RailItem>
              <Icon w={17} h={17} c="#40454a" d="M10 .8L12 5L16.500 5.500L13.300 8.800L14 13.300L10 11.200L6 13.300L6.700 8.800L3.800 5.700L8 5ZM3.500 9.500L.5 12M4.500 13.500L2 16M10 13.500L8.500 16.500" />
            </RailItem>
            <RailItem>
              <Icon w={17} h={17} c="#40454a" d="M13 1H.8V13.500H9M7 11.500L9 13.500L7 15.500M4 10V4H16.300V14H12.500" />
            </RailItem>
            <RailItem>
              <Icon w={17} h={17} c="#40454a" d="M6 15.500H2V7.500Q.5 6.500 .8 4.500L3 1H13L15.500 4.500V7M.8 5Q2 8 4.500 5.500Q6 8.500 8.500 6M11.500 7Q9 10.500 11.500 15.500Q14.500 11 11.500 7M8 10.500Q8 15.500 11.500 15.800Q16 15.500 16.300 10Q13 11 12 14M8 10.500L11 14" />
            </RailItem>
            <RailItem>
              <Icon w={17} h={17} c="#40454a" d="M5.800 6.500Q5.800 4 8.500 4T11.200 6.500Q11.200 8 9.500 8.800Q8.500 9.500 8.500 10.800M8.500 13V13.200"><circle cx="8.500" cy="8.500" r="7.700" /></Icon>
            </RailItem>
          </RailList>
          <RailEnd>
            <Icon w={17} h={5} c="#565b61" sw={1.3}><circle cx="2.300" cy="2.500" r="1.600" /><circle cx="8.500" cy="2.500" r="1.600" /><circle cx="14.700" cy="2.500" r="1.600" /></Icon>
          </RailEnd>
        </SideRail>
      </Main>

      <StatusBar>
        <Slot $w={77}><TabName $track={0.1}>幻灯片 1 / 2</TabName></Slot>
        <Slot $w={11}><VRule $h={16} /></Slot>
        <Slot $w={75}><TabName $track={0.2}>Office 主题</TabName></Slot>
        <Slot $w={749}><VRule $h={16} /></Slot>
        <Slot $w={20}><Icon w={15} h={16} c="#73787e" d="M7.500 1L11 3L7.500 5L4 3ZM3.500 4L1 5.500V11.500L7.500 15.200L14 11.500V5L11.500 4M1.500 6L7.500 9.500V15M7.500 9.500L12 7" /></Slot>
        <Slot $w={76}><SoftLabel>智能美化</SoftLabel><CaretBox /><CaretBox /><Caret up c="#6a6f75" /></Slot>
        <Slot $w={12}><VRule $h={16} /></Slot>
        <Slot $w={19}><Icon w={17} h={14} c="#454a50" d="M.5 2H9M.5 7.500H16.500M.5 13H16.500M11 .5L13.500 3L16 .5" /></Slot>
        <Slot $w={44}>备注<CaretBox /><Caret /></Slot>
        <Slot $w={20}><Icon w={17} h={16} c="#454a50" d="M9 2H.8V15L4.500 12.500H14.500V8M13 .5V6.500M10 3.500H16" /></Slot>
        <Slot $w={35}>批注</Slot>
        <Slot $w={10}><VRule $h={16} /></Slot>
        <Slot $w={31}>
          <ViewButton><Icon w={16} h={15} c="#454a50" d="M.8 .8H15.200V14.200H.8ZM4.500 1V14M4.500 10H15" /></ViewButton>
        </Slot>
        <Slot $w={26}><Icon w={15} h={15} c="#454a50" d="M.8 .8H5.800V5.800H.8ZM9.200 .8H14.200V5.800H9.200ZM.8 9.200H5.800V14.200H.8ZM9.200 9.200H14.200V14.200H9.200Z" /></Slot>
        <Slot $w={29}><Icon w={16} h={15} c="#454a50" d="M8 2.500V14.500M8 2.500Q7.500 1 6 1H.8V13H6.500L8 14.500L9.500 13H15.200V1H10Q8.500 1 8 2.500" /></Slot>
        <Slot $w={10}><VRule $h={16} /></Slot>
        <Slot $w={52}>
          <PlayButton><Icon w={9} h={12} c="none"><path d="M0 0L9 6L0 12Z" fill="#fff" /></Icon></PlayButton>
          <Caret />
        </Slot>
        <Slot $w={13}><VRule $h={16} /></Slot>
        <Slot $w={24}><Icon w={15} h={14} d="M.8 3.500V.8H3.500M11.500 .8H14.200V3.500M14.200 10.500V13.200H11.500M3.500 13.200H.8V10.500M4.500 3.500H10.500V10.500H4.500Z" /></Slot>
        <Slot $w={46}><TabName>83%</TabName><Caret /></Slot>
        <Slot $w={23}><Icon w={11} h={2} c="#40454f" d="M.5 1H10.500" sw={2} /></Slot>
        <Slot $w={155}>
          <Icon w={143} h={14} c="none">
            <path d="M0 7H52" stroke="#666b70" />
            <path d="M63 7H143" stroke="#d5d7d9" />
            <path d="M71.500 4.500V9.500" stroke="#d5d7d9" />
            <circle cx="57.500" cy="7" r="6" stroke="#666b70" fill="#f4f5f5" />
          </Icon>
        </Slot>
        <Slot $w={12}><Icon w={11} h={11} c="#40454f" d="M5.500 .8V10.200M.8 5.500H10.200" sw={1.8} /></Slot>
      </StatusBar>

      <Taskbar>
        <Slot $w={50} $center>
          <Icon w={18} h={18} c="none">
            <path d="M0 2.700L7.700 1.600V8.500H0ZM8.700 1.500L18 0V8.500H8.700ZM0 9.500H7.700V16.400L0 15.300ZM8.700 9.500H18V18L8.700 16.600Z" fill="#fff" />
          </Icon>
        </Slot>
        <SearchBox>
          <Slot $w={28}><Icon w={17} h={17} c="#222" d="M6.500 10.500L.8 16.200" sw={1.4}><circle cx="10.500" cy="6.200" r="5.400" /></Icon></Slot>
          在这里输入你要搜索的内容
        </SearchBox>
        <Slot $w={58}>
          <Slot $w={17} />
          <Icon w={17} h={16} c="#e8e8e8" d="M.8 0V2.500H11V0M.8 5H11V11H.8ZM.8 16V13.500H11V16M15.500 0V4M15.500 9V16M14.500 6.500H16.500" sw={1.2} />
        </Slot>
        <TaskButton $w={42} $gap={9} $run>
          <Icon w={24} h={24} c="none">
            <circle cx="12" cy="12" r="11.500" fill="#e8503f" />
            <path d="M2 6.200A11.500 11.500 0 0 0 11 23.500L16.500 14L12 17L7.500 14.500Z" fill="#2a9d55" />
            <path d="M11 23.500A11.500 11.500 0 0 0 22.300 6.700H12L17.200 12L16.500 14.500Z" fill="#fbcd3c" />
            <circle cx="12" cy="12" r="5.400" fill="#fff" />
            <circle cx="12" cy="12" r="4.300" fill="#4285f0" />
          </Icon>
        </TaskButton>
        <TaskButton $w={43} $gap={8} $run>
          <Icon w={23} h={19} c="none">
            <path d="M0 0H9L11 2H23V19H0Z" fill="#f3b52f" />
            <path d="M0 4H23V19H0Z" fill="#fcd873" />
            <path d="M0 1H10V4H0Z" fill="#ec9b16" />
            <path d="M4 19V10.500H19V19H15V14H8V19Z" fill="#3f93cc" />
          </Icon>
        </TaskButton>
        <TaskButton $w={43} $gap={5}>
          <svg width="26" height="26" viewBox="0 0 26 26">
            <defs>
              <linearGradient id="edgeTop" x1="0" x2="1"><stop offset="0" stopColor="#25a8e6" /><stop offset="1" stopColor="#63d873" /></linearGradient>
            </defs>
            <circle cx="13" cy="13" r="12.500" fill="#1273c8" />
            <path d="M.6 12A12.500 12.500 0 0 1 25.500 12.500Q25.500 18 19.500 18Q15.500 18 15.500 16Q18 13 15 10Q9 5 .6 12Z" fill="url(#edgeTop)" />
            <path d="M15.500 16Q15.500 18 19.500 18.200Q22 18.300 24.500 17Q22.500 22.500 17.500 24.500Q9 23 9.500 15Q10 10 14.500 10.500Q17.500 12.500 15.500 16Z" fill="#0d4f9e" />
            <path d="M15.500 15.800Q17 12.500 14.500 10.700Q12 11 12.500 14Q13 19 24.500 18L25.500 15Q22 18.500 17 17.500Z" fill="#262626" />
          </svg>
        </TaskButton>
        <TaskButton $w={51} $gap={5} $run $on>
          <Icon w={26} h={20} c="none">
            <path d="M0 0H15L13.500 4H6.500L10 13L14.500 .5H19L12 20H7.500Z" fill="#f43e2e" />
            <path d="M12 13L16.500 .5H20.500L18.500 12L21.500 0H26L19.500 20H15.500L14.800 10L11 20H8.500Z" fill="#fd6040" />
          </Icon>
        </TaskButton>
        <TaskButton $w={42} $gap={462} $run>
          <PcBadge>PC<PcBar /></PcBadge>
        </TaskButton>
        <Slot $w={32}>
          <svg width="22" height="20" viewBox="0 0 22 17" preserveAspectRatio="none">
            <defs><linearGradient id="sky" y1="0" y2="1"><stop offset="0" stopColor="#d8eefb" /><stop offset="1" stopColor="#7fc1ea" /></linearGradient></defs>
            <path d="M5 15.500A4.500 4.500 0 0 1 3.500 7Q4 0 11 0Q17 0 18 5.500Q22 7 21.500 11Q21 15.500 17 15.500Z" fill="url(#sky)" />
          </svg>
        </Slot>
        <Slot $w={42}><Temperature>22°C</Temperature></Slot>
        <Slot $w={47}><TrayText>多云</TrayText></Slot>
        <Slot $w={24}><Icon w={14} h={8} c="#eee" d="M.8 7L7 1L13.200 7" /></Slot>
        <Slot $w={25}>
          <Icon w={17} h={12} c="#eee" d="M3.500 3V11H15.500V3ZM17 5.500V8.500M1 0V3M4 0V3M.5 3H4.500M2.500 4V8" sw={1.2}><path d="M5 4.500H14V9.500H5Z" fill="#eee" stroke="none" /></Icon>
        </Slot>
        <Slot $w={27}><Icon w={17} h={14} c="#eee" d="M.8 4.500H3L6.500 1V13L3 9.500H.8ZM9 4.500Q10.500 7 9 9.500" sw={1.2}><path d="M11.500 2.500Q14.500 7 11.500 11.500M14 .8Q18.500 7 14 13.200" stroke="#777" /></Icon></Slot>
        <Slot $w={22}><Icon w={15} h={14} c="#bbb" d="M.8 13.500Q1 1 13.500 .8M4.500 13.500Q5 5 13.500 4.500M8 13.500Q8.500 9 13.500 8.500M12 12.500L13.500 12.500" /></Slot>
        <Slot $w={22}><TrayText>中</TrayText></Slot>
        <Slot $w={88}><Clock>20:54<br />2021/11/26</Clock></Slot>
        <Slot $w={48}><Icon w={23} h={20} c="none"><path d="M0 0L3 1.500V20H0ZM23 0L20 1.500V20H23ZM4.500 3.500L11.500 11L18.500 3.500V18H15.500V10L11.500 14.500L7.500 10V18H4.500Z" fill="#fff" /></Icon></Slot>
        <Slot $w={38}>
          <BadgeWrap>
            <Icon w={17} h={19} c="none"><path d="M0 0H17V14H9L5.500 18V14H0Z" fill="#fff" /><path d="M3 4H14M3 7H14M3 10H10" stroke="#333" /></Icon>
            <Badge>3</Badge>
          </BadgeWrap>
        </Slot>
        <Slot $w={2}><VRule $h={41} /></Slot>
      </Taskbar>
    </Window>
  );
}
